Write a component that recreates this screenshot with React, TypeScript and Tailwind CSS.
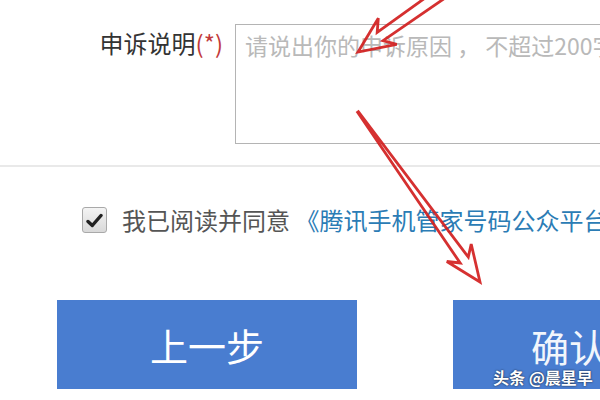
import React from 'react';

const FONT = { fontFamily: '"Noto Sans CJK SC", "Noto Sans", sans-serif' };

type Pt = [number, number];

// hollow, tapering arrow as drawn by a screenshot annotation tool
function arrowPoints(tail: Pt, tip: Pt, headLen: number, headHalf: number, neckHalf: number, tailHalf: number) {
  const dx = tip[0] - tail[0];
  const dy = tip[1] - tail[1];
  const len = Math.hypot(dx, dy);
  const ux = dx / len;
  const uy = dy / len;
  const nx = -uy;
  const ny = ux;
  const neck: Pt = [tip[0] - ux * (headLen * 0.75), tip[1] - uy * (headLen * 0.75)];
  const back: Pt = [tip[0] - ux * headLen, tip[1] - uy * headLen];
  const pts: Pt[] = [
    [tail[0] + nx * tailHalf, tail[1] + ny * tailHalf],
    [neck[0] + nx * neckHalf, neck[1] + ny * neckHalf],
    [back[0] + nx * headHalf, back[1] + ny * headHalf],
    tip,
    [back[0] - nx * headHalf, back[1] - ny * headHalf],
    [neck[0] - nx * neckHalf, neck[1] - ny * neckHalf],
    [tail[0] - nx * tailHalf, tail[1] - ny * tailHalf],
  ];
  return pts.map((p) => `${p[0].toFixed(1)},${p[1].toFixed(1)}`).join(' ');
}

function Annotations() {
  return (
    <svg className="pointer-events-none absolute inset-0" width="600" height="400" viewBox="0 0 600 400">
      <g fill="none" stroke="#d21f1f" strokeWidth="2.8" strokeLinejoin="miter" opacity="0.92">
        <polygon points={arrowPoints([452, -14], [358, 52], 36, 16, 5, 6)} />
        <polygon points={arrowPoints([358, 112], [480, 282], 36, 15, 5, 0.5)} />
      </g>
    </svg>
  );
}

export default function App() {
  return (
    <div className="relative h-[400px] w-[600px] overflow-hidden bg-white" style={FONT}>
      <div className="flex pt-[24px]">
        <div className="w-[235px] shrink-0 whitespace-nowrap pr-[12px] pt-[7px] text-right text-[24px] leading-[24px] text-[#333]">
          申诉说明<span className="text-[#c23a3a]">(*)</span>
        </div>
        <div className="h-[120px] w-[420px] shrink-0 border border-[#b4b4b4] px-[9px] pt-[8px]">
          <div className="whitespace-nowrap text-[23px] leading-[24px] text-[#b9b9b9]">
            请说出你的申诉原因 ， 不超过200字
          </div>
        </div>
      </div>

      <div className="mt-[21px] h-[2px] bg-[#e9e9e9]" />

      <div className="mt-[40px] flex items-center pl-[82px]">
        <div className="flex h-[26px] w-[25px] shrink-0 items-center justify-center rounded-[3px] border border-[#a9a9a9] bg-gradient-to-b from-[#f4f4f4] to-[#d9d9d9]">
          <svg width="17" height="15" viewBox="0 0 17 15">
            <path d="M2 8.5 L6.3 12.5 L15 2.5" fill="none" stroke="#222" strokeWidth="3.4" strokeLinecap="round" strokeLinejoin="round" />
          </svg>
        </div>
        <div className="ml-[15px] whitespace-nowrap text-[24px] leading-[26px] text-[#555]">
          我已阅读并同意 <span className="text-[#2b7cb5]">《腾讯手机管家号码公众平台服务协议》</span>
        </div>
      </div>

      <div className="mt-[67px] flex gap-[96px] pl-[57px]">
        <div className="flex h-[89px] w-[300px] shrink-0 items-center justify-center bg-[#497dd0] text-[38px] text-white">
          上一步
        </div>
        <div className="relative h-[89px] w-[300px] shrink-0 bg-[#497dd0]">
          <div className="pl-[78px] pt-[26px] text-[38px] leading-[40px] text-[#f2f6fc]">确认提交</div>
          <div className="absolute bottom-[2px] left-[40px] whitespace-nowrap text-[16px] font-bold leading-[19px] text-white [text-shadow:0_0_2px_rgba(0,0,0,0.85)]">
            头条 @晨星早
          </div>
        </div>
      </div>

      <Annotations />
    </div>
  );
}
